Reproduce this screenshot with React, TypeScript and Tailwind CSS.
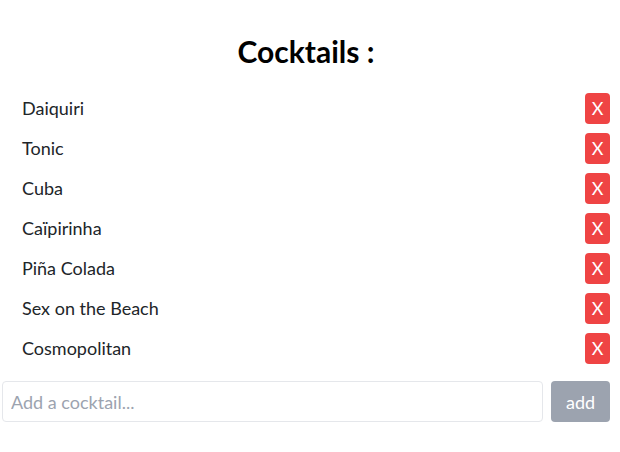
import { useState } from "react";

const initial = [
  "Daiquiri",
  "Tonic",
  "Cuba",
  "Caïpirinha",
  "Piña Colada",
  "Sex on the Beach",
  "Cosmopolitan",
];

export default function App() {
  const [cocktails, setCocktails] = useState<string[]>(initial);
  const [value, setValue] = useState("");

  const add = () => {
    if (!value.trim()) return;
    setCocktails([...cocktails, value.trim()]);
    setValue("");
  };

  return (
    <div className="min-h-screen bg-white pl-[2px] pr-[10px] font-['Lato','Noto_Sans',sans-serif] text-[#212529]">
      <h1 className="pt-[33px] h-[88px] text-center text-[30px] leading-[36px] font-bold text-black">
        Cocktails :
      </h1>
      <ul>
        {cocktails.map((c, i) => (
          <li key={i} className="flex h-10 items-center justify-between pl-5">
            <span className="text-lg">{c}</span>
            <button
              onClick={() => setCocktails(cocktails.filter((_, j) => j !== i))}
              className="h-[31px] w-[25px] rounded bg-[#ef4444] text-lg text-white"
            >
              X
            </button>
          </li>
        ))}
      </ul>
      <div className="mt-[13px] flex gap-2">
        <input
          value={value}
          onChange={(e) => setValue(e.target.value)}
          placeholder="Add a cocktail..."
          className="h-[41px] flex-1 rounded border border-[#e5e7eb] px-2 text-lg outline-none placeholder:text-[#9ca3af]"
        />
        <button
          onClick={add}
          className="h-[41px] w-[59px] rounded bg-[#9ca3af] text-lg text-white"
        >
          add
        </button>
      </div>
    </div>
  );
}
